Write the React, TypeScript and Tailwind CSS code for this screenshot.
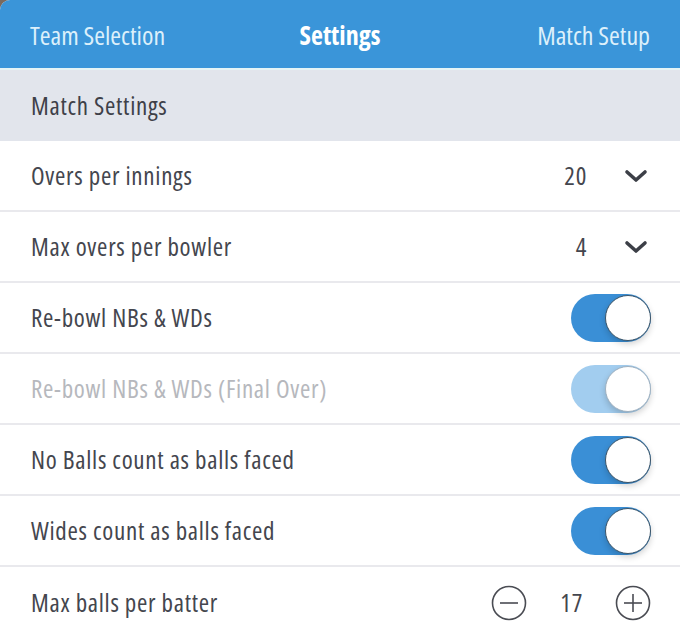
import React from "react";

const font = "font-['Open_Sans','DejaVu_Sans_Condensed',sans-serif] font-stretch-condensed";

function Chevron() {
  return (
    <svg width="24" height="14" viewBox="0 0 24 14" className="ml-[37px] mr-[3px]">
      <path d="M3 3 L12 11 L21 3" fill="none" stroke="#3c3f47" strokeWidth="3.6" strokeLinecap="round" strokeLinejoin="round" />
    </svg>
  );
}

function Toggle({ disabled = false }: { disabled?: boolean }) {
  return (
    <div
      className={`relative w-[80px] h-[48px] rounded-full ${disabled ? "bg-[#a2cdef]" : "bg-[#3a8fd6]"}`}
    >
      <div
        className={`absolute right-0 top-px w-[46px] h-[46px] rounded-full bg-white border ${
          disabled ? "border-[#9fb0bf]" : "border-[#3b5468]"
        } shadow-[0_3px_6px_rgba(0,0,0,0.18)]`}
      />
    </div>
  );
}

function CircleIcon({ plus }: { plus?: boolean }) {
  return (
    <svg width="36" height="36" viewBox="0 0 36 36">
      <circle cx="18" cy="18" r="16.5" fill="none" stroke="#4a4c53" strokeWidth="1.6" />
      <path d="M9 18 H27" stroke="#4a4c53" strokeWidth="1.6" />
      {plus && <path d="M18 9 V27" stroke="#4a4c53" strokeWidth="1.6" />}
    </svg>
  );
}

function Row({ label, disabled, children, last }: { label: string; disabled?: boolean; children: React.ReactNode; last?: boolean }) {
  return (
    <div
      className={`flex items-center justify-between h-[71px] pl-[31px] pr-[29px] ${last ? "" : "border-b-2 border-[#e9e9ed]"}`}
    >
      <span className={`text-[25px] tracking-[0.7px] ${disabled ? "text-[#b6b8bd]" : "text-[#44464e]"}`}>{label}</span>
      <div className="flex items-center">{children}</div>
    </div>
  );
}

export default function App() {
  return (
    <div className={`w-[680px] h-[635px] bg-[#7a6a5e] overflow-hidden ${font}`}>
      <div className="bg-white h-full rounded-tl-[10px] overflow-hidden">
        <div className="h-[68px] bg-[#3a95d9] grid grid-cols-3 items-center px-[30px] pt-[2px] text-[26px]">
          <span className="text-[#dcf0fb]">Team Selection</span>
          <span className="font-bold text-white text-center">Settings</span>
          <span className="text-[#dcf0fb] text-right">Match Setup</span>
        </div>
        <div className="h-[2px] bg-[#e4f4f6]" />
        <div className="h-[71px] bg-[#e2e5ec] flex items-center pl-[31px] text-[25px] tracking-[0.7px] font-medium text-[#3e4048]">
          Match Settings
        </div>
        <Row label="Overs per innings">
          <span className="text-[25px] tracking-[0.7px] text-[#44464e]">20</span>
          <Chevron />
        </Row>
        <Row label="Max overs per bowler">
          <span className="text-[25px] tracking-[0.7px] text-[#44464e]">4</span>
          <Chevron />
        </Row>
        <Row label="Re-bowl NBs & WDs">
          <Toggle />
        </Row>
        <Row label="Re-bowl NBs & WDs (Final Over)" disabled>
          <Toggle disabled />
        </Row>
        <Row label="No Balls count as balls faced">
          <Toggle />
        </Row>
        <Row label="Wides count as balls faced">
          <Toggle />
        </Row>
        <Row label="Max balls per batter" last>
          <CircleIcon />
          <span className="text-[25px] tracking-[0.7px] text-[#44464e] ml-[33px] mr-[32px]">17</span>
          <CircleIcon plus />
        </Row>
      </div>
    </div>
  );
}
